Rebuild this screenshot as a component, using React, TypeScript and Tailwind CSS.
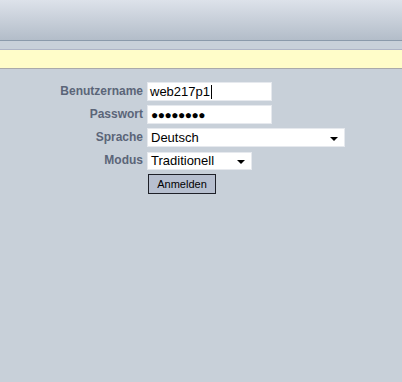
import React from "react";

function Caret() {
  return (
    <svg width="8" height="4" viewBox="0 0 8 4" className="shrink-0 mt-[2px]">
      <path d="M0 0h8L4 4z" fill="#000" />
    </svg>
  );
}

export default function App() {
  const label = "text-right text-[12px] font-bold text-[#5b6578] leading-[19px]";
  return (
    <div
      className="w-[402px] h-[382px] bg-[#c8d0d9] flex flex-col"
      style={{ fontFamily: '"Liberation Sans", Arial, sans-serif' }}
    >
      {/* Header */}
      <div className="h-[41px] bg-gradient-to-b from-[#dde2ea] to-[#b3bdc9] border-b border-[#8b9aab]" />
      <div className="h-[9px] border-b border-[#aeb4c6]" />
      <div className="h-[19px] bg-[#fffdc9] border-b border-[#aaaaaa]" />

      {/* Login form */}
      <div className="grid grid-cols-[143px_auto] gap-x-[4px] gap-y-[4px] mt-[13px] items-center justify-start">
        <span className={label}>Benutzername</span>
        <div className="w-[125px] h-[19px] bg-white border border-[#e6e9ee] flex items-center pl-[2px] text-[13px] text-black">
          web217p1<span className="w-px h-[14px] bg-black ml-[1px]" />
        </div>

        <span className={label}>Passwort</span>
        <div className="w-[125px] h-[19px] bg-white border border-[#e6e9ee] flex items-center pl-[3px] text-[12px] text-black tracking-[-0.5px]">
          ●●●●●●●●
        </div>

        <span className={label}>Sprache</span>
        <div className="w-[198px] h-[19px] bg-white border border-[#e6e9ee] flex items-center justify-between pl-[3px] pr-[6px] text-[13px] text-black">
          <span>Deutsch</span>
          <Caret />
        </div>

        <span className={label}>Modus</span>
        <div className="w-[105px] h-[18px] bg-white border border-[#e6e9ee] flex items-center justify-between pl-[3px] pr-[6px] text-[13px] text-black">
          <span>Traditionell</span>
          <Caret />
        </div>

        <span />
        <button className="ml-[1px] w-[68px] h-[20px] bg-[#b7bfcf] border border-[#1e2028] text-[11px] text-black leading-none">
          Anmelden
        </button>
      </div>
    </div>
  );
}
